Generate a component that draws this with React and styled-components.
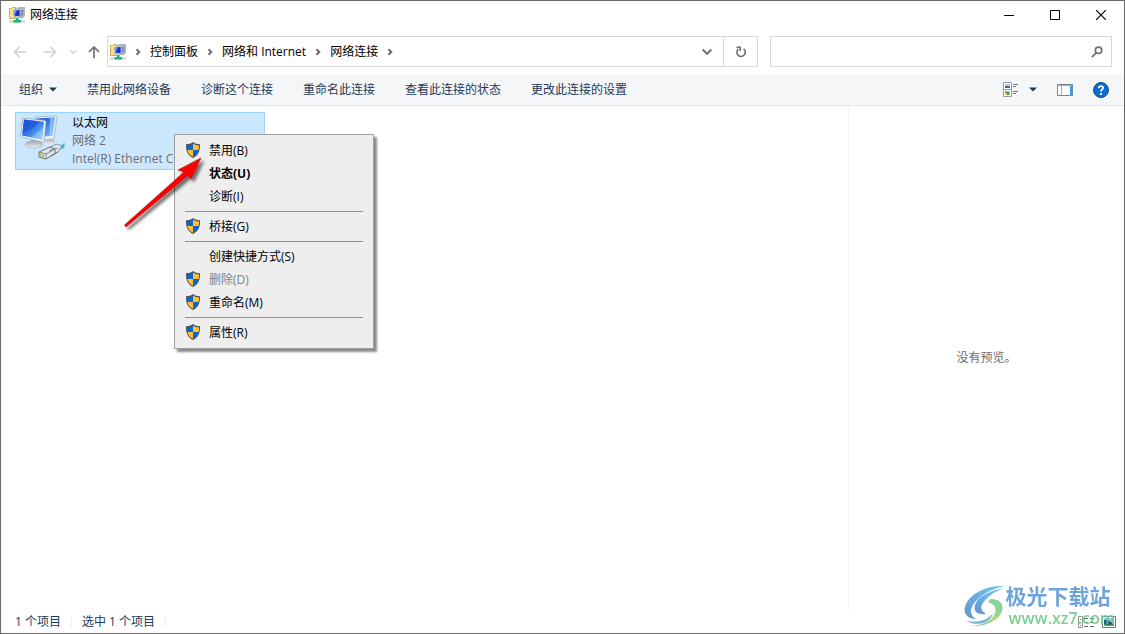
import styled, { createGlobalStyle } from 'styled-components'

const GlobalStyle = createGlobalStyle`
  * {
    box-sizing: border-box;
  }
  body {
    margin: 0;
    font-family: 'Open Sans', 'Noto Sans CJK SC', sans-serif;
    font-size: 12px;
    line-height: 18px;
    color: #000000;
  }
  button,
  input {
    font: inherit;
    color: inherit;
  }
  button {
    padding: 0;
    border: 0;
    background: none;
  }
  svg {
    display: block;
    flex: none;
  }
`

const Window = styled.div`
  position: relative;
  display: flex;
  flex-direction: column;
  min-height: 100vh;
  border: 1px solid #6b6869;
  background: #ffffff;
  overflow: hidden;
`

const TitleBar = styled.header`
  display: flex;
  align-items: center;
  height: 28px;
  padding-left: 8px;
`
const Title = styled.h1`
  flex: 1;
  margin: 0 0 0 5px;
  font-size: 12px;
  font-weight: 400;
`
const CaptionButton = styled.button`
  display: grid;
  place-items: center;
  width: 46px;
  height: 28px;
`

const NavBar = styled.nav`
  display: flex;
  align-items: center;
  padding: 7px 12px 7px 4px;
`
const NavButton = styled.button`
  display: grid;
  place-items: center;
  width: ${(props) => props.$width}px;
  height: 30px;
  color: ${(props) => (props.disabled ? '#d2d2d2' : '#6f6f6f')};
`
const AddressBar = styled.div`
  display: flex;
  flex: 1;
  align-items: center;
  height: 31px;
  margin-right: 12px;
  padding-left: 2px;
  border: 1px solid #d9d9d9;
`
const Crumb = styled.button`
  white-space: nowrap;
`
const CrumbArrow = styled.span`
  display: grid;
  place-items: center;
  width: 24px;
  color: #6f6f6f;
`
const Spacer = styled.div`
  flex: 1;
`
const RefreshButton = styled(NavButton)`
  border-left: 1px solid #d9d9d9;
`
const SearchBox = styled.label`
  display: flex;
  align-items: center;
  width: 342px;
  height: 31px;
  padding-right: 8px;
  border: 1px solid #d9d9d9;
  color: #6f6f6f;
`
const SearchInput = styled.input`
  flex: 1;
  min-width: 0;
  padding: 0 8px;
  border: 0;
  outline: 0;
  background: none;
`

const Toolbar = styled.div`
  display: flex;
  align-items: center;
  height: 32px;
  padding: 0 15px 0 3px;
  border-bottom: 1px solid #e5e7ea;
  background: #f5f6f7;
  color: #1e395b;
`
const Command = styled.button`
  display: flex;
  align-items: center;
  gap: 6px;
  height: 30px;
  padding: 0 15px;
  white-space: nowrap;
`
const ToolButton = styled.button`
  display: flex;
  align-items: center;
  gap: 10px;
  height: 30px;
  margin-left: 20px;
`

const Body = styled.div`
  display: flex;
  flex: 1;
`
const FileList = styled.main`
  flex: 1;
  padding: 6px 14px;
`
const Connection = styled.div`
  display: flex;
  width: 250px;
  height: 58px;
  padding: 1px 3px;
  border: 1px solid #99d1ff;
  background: #cce8ff;
`
const ConnectionText = styled.div`
  min-width: 0;
  margin-left: 5px;
`
const Line = styled.div`
  overflow: hidden;
  white-space: nowrap;
  text-overflow: ellipsis;
  color: ${(props) => (props.$muted ? '#6d6d6d' : '#000000')};
`
const Preview = styled.aside`
  display: grid;
  place-items: center;
  width: 276px;
  border-left: 1px solid #f2f3f5;
  color: #6d6d6d;
`

const StatusBar = styled.footer`
  display: flex;
  align-items: center;
  height: 23px;
  padding: 0 8px 0 4px;
  color: #1e395b;
`
const StatusText = styled.span`
  padding: 0 10px;
  border-right: 1px solid #f0f0f0;
  line-height: 12px;
`
const ViewButton = styled.button`
  margin-left: 8px;
`

const Menu = styled.div`
  position: absolute;
  left: 173px;
  top: 133px;
  width: 200px;
  padding: 4px 0;
  border: 1px solid #a0a0a0;
  background: #eeeeee;
  box-shadow: 3px 3px 2px rgba(0, 0, 0, 0.45);
`
const MenuItem = styled.button`
  display: flex;
  align-items: center;
  gap: 8px;
  width: 100%;
  height: 23px;
  padding-left: 10px;
  font-weight: ${(props) => (props.$bold ? 700 : 400)};
  color: ${(props) => (props.disabled ? '#838383' : '#000000')};
`
const MenuIcon = styled.span`
  width: 16px;
  height: 18px;
`
const Separator = styled.hr`
  height: 1px;
  margin: 3px 10px;
  border: 0;
  background: #919191;
`

const Pointer = styled.svg`
  position: absolute;
  left: 115px;
  top: 145px;
`

const Watermark = styled.div`
  position: absolute;
  right: 9px;
  bottom: 5px;
  display: flex;
  align-items: center;
  opacity: 0.9;
  pointer-events: none;
`
const WatermarkName = styled.div`
  font-size: 21px;
  font-weight: 700;
  line-height: 24px;
  color: #5f9bd8;
`
const WatermarkSite = styled.div`
  padding-left: 3px;
  font-size: 16px;
  font-weight: 600;
  line-height: 20px;
  color: #6dca88;
`

function NetworkIcon() {
  return (
    <svg width="16" height="16" viewBox="0 0 16 16">
      <path d="M.5 1.5h2l1-1h3v11h-6z" fill="#f7e28f" stroke="#c9ae55" />
      <path d="M8 1l7-1 .8.8v8L13 11l-5-1z" fill="#b4bcc6" stroke="#8a949f" strokeWidth=".6" />
      <path d="M4.5 3l7-1.6v8.8l-7-.6z" fill="#dfe5ee" stroke="#8f9aac" strokeWidth=".6" />
      <path d="M5.5 3.8l5.2-1v6.4l-5.2-.5z" fill="#1733c9" />
      <path d="M5.5 3.8l2.4-.5-1.2 3-1.2.8z" fill="#7995f2" />
      <path d="M12 3l2.4-.4v5.6L12 9z" fill="#8290b4" />
      <path d="M0 13.5h16v2H0z" fill="#cdd1d4" />
      <path d="M7 11h2.5v2H12v2.5H4.5V13H7z" fill="#18b578" />
    </svg>
  )
}

function Chevron({ down, size = 8, width = 2 }) {
  return (
    <svg width={size} height={size} viewBox="0 0 8 8" fill="none" stroke="currentColor" strokeWidth={width}>
      <path d={down ? 'M.5 2L4 5.5 7.5 2' : 'M2.5 1.2L5.3 4 2.5 6.8'} />
    </svg>
  )
}

function Arrow({ d }) {
  return (
    <svg width="14" height="14" viewBox="0 0 14 14" fill="none" stroke="currentColor" strokeWidth="1.7">
      <path d={d} />
    </svg>
  )
}

function Triangle() {
  return (
    <svg width="8" height="5" viewBox="0 0 8 5">
      <path d="M0 .5h8L4 4.5z" fill="#1e395b" />
    </svg>
  )
}

function ViewIcon() {
  return (
    <svg width="16" height="16" viewBox="0 0 16 16">
      <path d="M.5 .5h8v7h-8zM.5 7.5h8v7h-8z" fill="#fff" stroke="#9a9a9a" />
      <path d="M2 2h5v4H2z" fill="#a7d3f3" />
      <path d="M2 4.5l2-.8 3 .8V6H2z" fill="#2c6a86" />
      <path d="M2 9h5v4H2z" fill="#b9d879" />
      <path d="M2 9h2v2H2z" fill="#e07a4a" />
      <path d="M4 10h2v3H4z" fill="#3f9840" />
      <path d="M10 2.5h5M10 4.5h3M10 9.5h5M10 11.5h3" stroke="#777" />
    </svg>
  )
}

function PaneIcon() {
  return (
    <svg width="16" height="12" viewBox="0 0 16 12">
      <path d="M.5 .5h15v11H.5z" fill="#fff" stroke="#7f8388" />
      <path d="M1 1.5h14M4.5 2v9" stroke="#a8acb0" />
      <path d="M13 2h2.5v9.5H13z" fill="#3f9be8" />
    </svg>
  )
}

function HelpIcon() {
  return (
    <svg width="16" height="16" viewBox="0 0 16 16">
      <circle cx="8" cy="8" r="7.5" fill="#0a6ccf" stroke="#164f8c" />
      <path d="M5.8 6.2C5.8 3.3 10.3 3.5 10.1 6 10 7.5 8 7.6 8 9.6" fill="none" stroke="#fff" strokeWidth="1.8" />
      <path d="M7 11h2v2H7z" fill="#fff" />
    </svg>
  )
}

function Shield() {
  return (
    <svg width="16" height="16" viewBox="0 0 16 16">
      <path d="M8 0c2 1.6 4 2.2 7 2.2C15.4 9 13 13.5 8 16 3 13.5.6 9 1 2.2 4 2.2 6 1.6 8 0z" fill="#4c555c" />
      <path d="M8 1.4V8H2.3C2 6.500 2 5 2 3.3c2.300-.1 4.200-.6 6-1.900z" fill="#0a66d4" />
      <path d="M8 1.4V8h5.7c.3-1.500.3-3 .3-4.700-2.300-.1-4.200-.6-6-1.900z" fill="#ffbf36" />
      <path d="M8 8v6.800C4.800 13.200 3 11 2.300 8z" fill="#ffbf36" />
      <path d="M8 8v6.800c3-1.500 5-3.800 5.700-6.800z" fill="#0a66d4" />
    </svg>
  )
}

function ComputersIcon() {
  return (
    <svg width="48" height="48" viewBox="0 -1 48 48">
      <defs>
        <linearGradient id="screen" x1="0" y1="0" x2="1" y2="1">
          <stop offset="0" stopColor="#1550d3" />
          <stop offset=".45" stopColor="#2f76ea" />
          <stop offset="1" stopColor="#8fd0fb" />
        </linearGradient>
        <linearGradient id="stand" x1="0" y1="0" x2="0" y2="1">
          <stop offset="0" stopColor="#9aa5ae" />
          <stop offset="1" stopColor="#eef1f3" />
        </linearGradient>
      </defs>
      <path d="M26 22l8 2 3 3-9 3z" fill="url(#stand)" />
      <path d="M15 2l22-1 1 1-3 22-9 1z" fill="#edf2f6" stroke="#a3afb9" strokeWidth=".8" />
      <path d="M17 3.5l19-1-2.500 18-8 1z" fill="url(#screen)" />
      <path d="M31 3l5-.4-2.500 18-3 .3z" fill="#a8d3f8" opacity=".6" />
      <path d="M13 23l8 1 1 5H11z" fill="#a9b3ba" />
      <ellipse cx="15" cy="29.5" rx="9" ry="3.8" fill="url(#stand)" stroke="#a5afb7" strokeWidth=".6" />
      <path d="M4 3l22 2.500 1 1-2 20-1 .8L2 22 1.500 21z" fill="#f2f6f9" stroke="#9ba8b3" strokeWidth=".8" />
      <path d="M5 4.500l20 2.300-1.800 18L3 20.500z" fill="url(#screen)" />
      <path d="M5 4.500l15 1.700C17 12 11 16 3.500 17z" fill="#1c4fd6" opacity=".55" />
      <path d="M25 6.800L24.500 12 13 22.300 23.200 24.800z" fill="#b6e2ff" opacity=".4" />
      <path d="M37 33l9-5-1 5-8 3z" fill="#44b6dd" />
      <path d="M29 33l9-4 5 2-4 6-7 3z" fill="#e2ebf2" stroke="#74848f" strokeWidth=".9" />
      <path d="M20 37l11-5 5 2v5l-9 5-7-2z" fill="#dfe6e4" stroke="#69757b" strokeWidth="1" />
      <path d="M20 37l7 2v5M27 39l9-5M30 36l7-3 2 1M31 41l8-4" fill="none" stroke="#69757b" strokeWidth=".8" />
      <path d="M21.500 38.500v3M23 39v3M24.500 39.500v3" stroke="#a9a447" strokeWidth=".8" />
    </svg>
  )
}

function LogoMark() {
  return (
    <svg width="43" height="42" viewBox="0 0 43 42">
      <defs>
        <linearGradient id="swooshBlue" x1="1" y1="0" x2="0" y2="1">
          <stop offset="0" stopColor="#62c6ee" />
          <stop offset="1" stopColor="#5688cd" />
        </linearGradient>
        <linearGradient id="swooshGreen" x1="1" y1="0" x2="0" y2="1">
          <stop offset="0" stopColor="#69c9a0" />
          <stop offset=".55" stopColor="#a5d76c" />
          <stop offset="1" stopColor="#6fb9c2" />
        </linearGradient>
      </defs>
      <path d="M42 1C24 0 8 8 3 19-1 28 4 34 13 34 8 31 6 26 10 20 16 11 27 4 42 1z" fill="url(#swooshBlue)" />
      <path d="M42 3C28 5 15 11 12 20c-2 7 3 10 11 9-5-3-6-7-3-11C25 11 32 6 42 3z" fill="url(#swooshBlue)" />
      <path d="M28 14c9 0 13 5 11 12C36 35 24 42 7 41c13-1 21-5 24-11 3-6 2-10-6-13 1-1 1-3 3-3z" fill="url(#swooshGreen)" />
      <path d="M3 36c11 2 21 0 27-8-3 10-14 14-27 8z" fill="#63a9cf" />
    </svg>
  )
}

const crumbs = ['控制面板', '网络和 Internet', '网络连接']

const commands = ['禁用此网络设备', '诊断这个连接', '重命名此连接', '查看此连接的状态', '更改此连接的设置']

const menuGroups = [
  [
    { label: '禁用(B)', shield: true },
    { label: '状态(U)', bold: true },
    { label: '诊断(I)' },
  ],
  [{ label: '桥接(G)', shield: true }],
  [
    { label: '创建快捷方式(S)' },
    { label: '删除(D)', shield: true, disabled: true },
    { label: '重命名(M)', shield: true },
  ],
  [{ label: '属性(R)', shield: true }],
]

function ContextMenu() {
  return (
    <Menu role="menu">
      {menuGroups.map((group, index) => (
        <div key={group[0].label}>
          {index > 0 && <Separator />}
          {group.map((item) => (
            <MenuItem key={item.label} role="menuitem" $bold={item.bold} disabled={item.disabled}>
              <MenuIcon>{item.shield && <Shield />}</MenuIcon>
              {item.label}
            </MenuItem>
          ))}
        </div>
      ))}
    </Menu>
  )
}

function App() {
  return (
    <Window>
      <GlobalStyle />
      <TitleBar>
        <NetworkIcon />
        <Title>网络连接</Title>
        <CaptionButton aria-label="最小化">
          <svg width="10" height="10" viewBox="0 0 10 10">
            <path d="M0 5.5h10" stroke="#000" />
          </svg>
        </CaptionButton>
        <CaptionButton aria-label="最大化">
          <svg width="10" height="10" viewBox="0 0 10 10">
            <path d="M.5 .5h9v9h-9z" fill="none" stroke="#000" />
          </svg>
        </CaptionButton>
        <CaptionButton aria-label="关闭">
          <svg width="10" height="10" viewBox="0 0 10 10">
            <path d="M0 0l10 10M10 0L0 10" stroke="#000" strokeWidth="1.2" />
          </svg>
        </CaptionButton>
      </TitleBar>

      <NavBar>
        <NavButton $width={30} disabled aria-label="后退">
          <Arrow d="M13 7H2M6.5 2L1.5 7l5 5" />
        </NavButton>
        <NavButton $width={30} disabled aria-label="前进">
          <Arrow d="M1 7h11M7.5 2l5 5-5 5" />
        </NavButton>
        <NavButton $width={16} disabled aria-label="最近浏览的位置">
          <Chevron down size={6} />
        </NavButton>
        <NavButton $width={26} aria-label="上移">
          <Arrow d="M7 13V2M2 7l5-5 5 5" />
        </NavButton>
        <AddressBar>
          <NetworkIcon />
          <CrumbArrow>
            <Chevron />
          </CrumbArrow>
          {crumbs.map((crumb) => [
            <Crumb key={crumb}>{crumb}</Crumb>,
            <CrumbArrow key={crumb + '-arrow'}>
              <Chevron />
            </CrumbArrow>,
          ])}
          <Spacer />
          <NavButton $width={32} aria-label="以前的位置">
            <Chevron down size={10} width={1.6} />
          </NavButton>
          <RefreshButton $width={34} aria-label="刷新">
            <svg width="12" height="12" viewBox="0 0 12 12" fill="none" stroke="currentColor" strokeWidth="1.6">
              <path d="M8.5 2.8A4.2 4.2 0 1 1 3.2 3.2M1.5 1.2H5.2V5" />
            </svg>
          </RefreshButton>
        </AddressBar>
        <SearchBox>
          <SearchInput type="text" aria-label="搜索" />
          <svg width="12" height="12" viewBox="0 0 12 12" fill="none" stroke="currentColor" strokeWidth="1.7">
            <circle cx="7.5" cy="4.3" r="3.2" />
            <path d="M5.2 6.8L.8 11.2" />
          </svg>
        </SearchBox>
      </NavBar>

      <Toolbar>
        <Command>
          组织
          <Triangle />
        </Command>
        {commands.map((command) => (
          <Command key={command}>{command}</Command>
        ))}
        <Spacer />
        <ToolButton aria-label="更改你的视图">
          <ViewIcon />
          <Triangle />
        </ToolButton>
        <ToolButton aria-label="显示预览窗格">
          <PaneIcon />
        </ToolButton>
        <ToolButton aria-label="获取帮助">
          <HelpIcon />
        </ToolButton>
      </Toolbar>

      <Body>
        <FileList>
          <Connection>
            <ComputersIcon />
            <ConnectionText>
              <Line>以太网</Line>
              <Line $muted>网络 2</Line>
              <Line $muted>Intel(R) Ethernet C</Line>
            </ConnectionText>
          </Connection>
        </FileList>
        <Preview>没有预览。</Preview>
      </Body>

      <StatusBar>
        <StatusText>1 个项目</StatusText>
        <StatusText>选中 1 个项目</StatusText>
        <Spacer />
        <ViewButton aria-label="详细信息">
          <svg width="16" height="12" viewBox="0 0 16 12">
            <path d="M.5 .5h4v11h-4z" fill="#fff" stroke="#8c9a94" />
            <path d="M2 3.5h1M2 6.5h1M2 9.5h1" stroke="#c0504d" />
            <path d="M6 2.5h4M12 2.5h4M6 6.5h4M12 6.5h4M6 10.5h4M12 10.5h4" stroke="#5f6f68" />
          </svg>
        </ViewButton>
        <ViewButton aria-label="大缩略图">
          <svg width="14" height="12" viewBox="0 0 14 12">
            <path d="M.5 .5h13v11H.5z" fill="#fff" stroke="#777" />
            <path d="M2 2h10v8H2z" fill="#8ccbe9" />
            <path d="M2 4l4 0 6 4v2H2z" fill="#1d5a80" />
            <path d="M2 8l5 1 5-1v2H2z" fill="#49a85f" />
          </svg>
        </ViewButton>
      </StatusBar>

      <Watermark>
        <LogoMark />
        <div>
          <WatermarkName>极光下载站</WatermarkName>
          <WatermarkSite>www.xz7.com</WatermarkSite>
        </div>
      </Watermark>

      <ContextMenu />

      <Pointer width="100" height="100" viewBox="116 146 100 100">
        <defs>
          <filter id="soft" x="-20%" y="-20%" width="150%" height="150%">
            <feDropShadow dx="3" dy="3" stdDeviation="1.5" floodOpacity=".55" />
          </filter>
        </defs>
        <path
          d="M201 158L191 179 188 175.5 126 227 124.5 225 184 172 178 170z"
          fill="#ff0000"
          stroke="#a51212"
          strokeWidth=".6"
          filter="url(#soft)"
        />
      </Pointer>
    </Window>
  )
}

export default App
